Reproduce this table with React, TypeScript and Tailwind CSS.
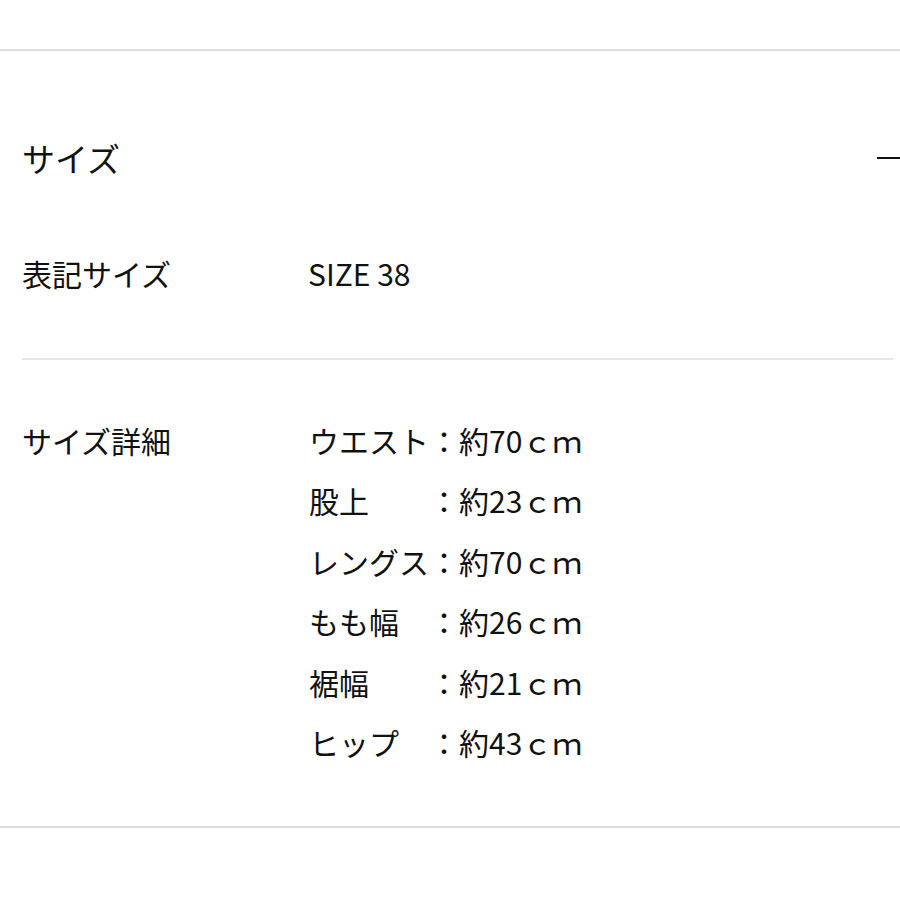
export default function App() {
  const rows = [
    "ウエスト：約70ｃｍ",
    "股上　　：約23ｃｍ",
    "レングス：約70ｃｍ",
    "もも幅　：約26ｃｍ",
    "裾幅　　：約21ｃｍ",
    "ヒップ　：約43ｃｍ",
  ]

  return (
    <div
      className="min-h-[900px] w-[900px] bg-white text-[#111] text-[30px]"
      style={{ fontFamily: '"Noto Sans CJK JP", "Noto Sans", sans-serif' }}
    >
      <div className="h-[49px]" />
      <div className="border-t-2 border-[#dedede]" />

      {/* accordion header */}
      <div className="flex items-center justify-between pl-[22px] pt-[89px] leading-[36px]">
        <span className="text-[33px]">サイズ</span>
        <span className="block h-[2px] w-[23px] bg-[#111]" />
      </div>

      {/* 表記サイズ */}
      <div className="mt-[79px] flex px-[22px] leading-[36px]">
        <div className="w-[287px]">表記サイズ</div>
        <div className="-ml-[1px]">SIZE 38</div>
      </div>

      <div className="mt-[67px] ml-[22px] mr-[7px] border-t-2 border-[#e6e6e6]" />

      {/* サイズ詳細 */}
      <div className="mt-[50px] flex px-[22px] leading-[60.4px]">
        <div className="w-[287px]">サイズ詳細</div>
        <div className="flex flex-col">
          {rows.map((r) => (
            <div key={r} className="whitespace-pre">
              {r}
            </div>
          ))}
        </div>
      </div>

      <div className="mt-[54px] border-t-2 border-[#dedede]" />
    </div>
  )
}
